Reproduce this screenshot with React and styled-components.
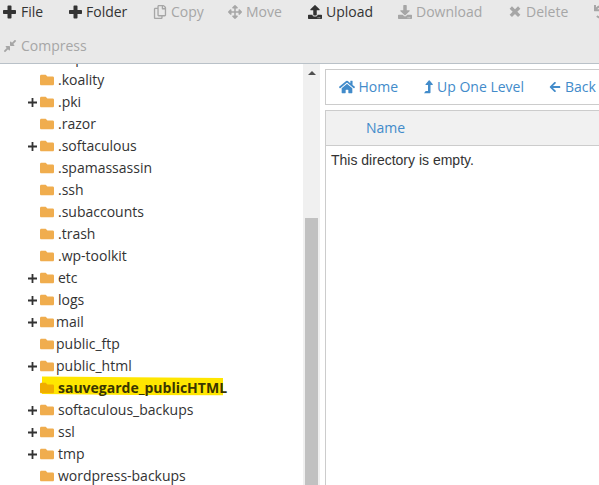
import React from "react";
import styled, { createGlobalStyle } from "styled-components";
import {
  FaRegCopy, FaArrowsAlt, FaUpload, FaDownload, FaUndo,
  FaCompressAlt, FaHome, FaArrowLeft, FaFolder,
} from "react-icons/fa";

const GlobalStyle = createGlobalStyle`
  * { box-sizing: border-box; }
  body { margin: 0; background: #fff; overflow: hidden; }
`;

const Page = styled.div`
  width: 599px;
  height: 485px;
  display: flex;
  flex-direction: column;
  overflow: hidden;
  color: #333;
  font: 14px/22px "Open Sans", "Noto Sans", sans-serif;
`;

const Toolbar = styled.header`
  height: 64px;
  flex: none;
  background: #e9e9e9;
  border-bottom: 1px solid #b9c1c8;
  overflow: hidden;
`;

const ToolRow = styled.div`
  display: flex;
  height: 34px;
  padding: 1px 0 0 3px;
`;

const Tool = styled.button`
  flex: 0 0 ${(p) => p.$width}px;
  display: flex;
  align-items: center;
  height: 22px;
  padding: 0;
  border: 0;
  background: none;
  font: inherit;
  white-space: nowrap;
  color: ${(p) => (p.$disabled ? "#a6a6a6" : "#333")};
  svg { flex: none; margin-right: ${(p) => p.$gap ?? 4}px; }
`;

const Body = styled.main`
  display: flex;
  flex: 1;
  min-height: 0;
`;

const Tree = styled.nav`
  width: 303px;
  overflow: hidden;
`;

const TreeList = styled.ul`
  list-style: none;
  margin: -17px 0 0;
  padding: 0 0 0 27px;
`;

const TreeItem = styled.li`
  display: flex;
  align-items: center;
  height: 22px;
  white-space: nowrap;
  font-weight: ${(p) => (p.$selected ? 700 : 400)};
  color: ${(p) => (p.$selected ? "#3a3500" : "#333")};
`;

const Toggle = styled.span`
  width: 13px;
  height: 11px;
  display: flex;
  svg { margin: 1px 0 0 1px; }
`;

const Entry = styled.span`
  position: relative;
  display: flex;
  align-items: center;
  svg.folder {
    position: relative;
    margin-right: ${(p) => (p.$tight ? 2 : 4)}px;
    color: ${(p) => (p.$selected ? "#f0ad00" : "#f0ad4e")};
  }
`;

const Label = styled.span`
  position: relative;
`;

const Marker = styled.svg`
  position: absolute;
  left: 2px;
  top: 0;
  overflow: visible;
`;

const Scrollbar = styled.div`
  width: 17px;
  background: #f0f0f0;
  display: flex;
  flex-direction: column;
  align-items: center;
`;

const ScrollUp = styled.svg`
  margin-top: 7px;
  flex: none;
`;

const Thumb = styled.div`
  width: 13px;
  flex: 1;
  margin-top: 143px;
  background: #c1c1c1;
`;

const Content = styled.section`
  flex: 1;
  min-width: 0;
  display: flex;
  flex-direction: column;
  padding: 5px 0 0 5px;
`;

const Actions = styled.div`
  height: 36px;
  flex: none;
  display: flex;
  align-items: center;
  padding-left: 13px;
  border: 1px solid #ccc;
  border-right: 0;
`;

const Action = styled(Tool)`
  color: #428bca;
`;

const Listing = styled.div`
  flex: 1;
  margin-top: 5px;
  border: 1px solid #ccc;
  border-width: 1px 0 0 1px;
`;

const ListHead = styled.div`
  height: 35px;
  padding: 6px 0 0 40px;
  background: #f1f1f1;
  border-bottom: 1px solid #ccc;
  color: #428bca;
`;

const Empty = styled.p`
  margin: 3px 0 0 5px;
  font: 14px/22px "Liberation Sans", Arial, sans-serif;
`;

const BoldPlus = () => (
  <svg width="14" height="14" viewBox="0 0 14 14" fill="currentColor">
    <path d="M5.3.5h2.4q.8 0 .8.8V5h3.7q.8 0 .8.8v2.4q0 .8-.8.8H8.5v3.7q0 .8-.8.8H5.3q-.8 0-.8-.8V9H.8Q0 9 0 8.200V5.800Q0 5 .8 5h3.700V1.300q0-.8.8-.8Z" />
  </svg>
);

const BoldTimes = () => (
  <svg width="14" height="14" viewBox="0 0 14 14" fill="none" stroke="currentColor">
    <path d="M2.800 2.500L11.200 10.900M11.200 2.500L2.800 10.900" strokeWidth="3.300" />
  </svg>
);

const LevelUp = () => (
  <svg width="9" height="14" viewBox="0 0 9 14" fill="currentColor">
    <path d="M0 13.200L1.700 11H4V5H2Q1.200 5 1.600 4.200L4.700.4Q5.200 0 5.700.4L8.800 4.200Q9.100 5 8.400 5H6.500V12.600Q6.500 13.300 5.800 13.300H.2Z" />
  </svg>
);

const tools = [
  { label: "File", Icon: BoldPlus, width: 66 },
  { label: "Folder", Icon: BoldPlus, width: 84, gap: 3 },
  { label: "Copy", Icon: FaRegCopy, width: 75, disabled: true },
  { label: "Move", Icon: FaArrowsAlt, width: 80, disabled: true },
  { label: "Upload", Icon: FaUpload, width: 90 },
  { label: "Download", Icon: FaDownload, width: 110, disabled: true },
  { label: "Delete", Icon: BoldTimes, width: 86, disabled: true },
  { label: "", Icon: FaUndo, width: 14, disabled: true },
];

const folders = [
  { name: ".htpasswds" },
  { name: ".koality" },
  { name: ".pki", open: true },
  { name: ".razor" },
  { name: ".softaculous", open: true },
  { name: ".spamassassin" },
  { name: ".ssh" },
  { name: ".subaccounts" },
  { name: ".trash" },
  { name: ".wp-toolkit" },
  { name: "etc", open: true },
  { name: "logs", open: true },
  { name: "mail", open: true, tight: true },
  { name: "public_ftp", tight: true },
  { name: "public_html", open: true, tight: true },
  { name: "sauvegarde_publicHTML", selected: true },
  { name: "softaculous_backups", open: true },
  { name: "ssl", open: true },
  { name: "tmp", open: true },
  { name: "wordpress-backups" },
];

export default function App() {
  return (
    <Page>
      <GlobalStyle />
      <Toolbar>
        <ToolRow>
          {tools.map(({ label, Icon, width, disabled, gap }) => (
            <Tool key={label} $width={width} $disabled={disabled} $gap={gap}>
              <Icon size={14} />{label}
            </Tool>
          ))}
        </ToolRow>
        <ToolRow>
          <Tool $width={90} $disabled><FaCompressAlt size={14} />Compress</Tool>
        </ToolRow>
      </Toolbar>
      <Body>
        <Tree>
          <TreeList>
            {folders.map((f) => (
              <TreeItem key={f.name} $selected={f.selected}>
                <Toggle>
                  {f.open && (
                    <svg width="9" height="9" viewBox="0 0 9 9"><path d="M4.5 0v9M0 4.5h9" stroke="#333" strokeWidth="1.8" /></svg>
                  )}
                </Toggle>
                <Entry $selected={f.selected} $tight={f.tight}>
                  {f.selected && (
                    <Marker width="182" height="22" viewBox="0 0 182 22"><path d="M0-.5L181 1V18.300L90 18L0 17Z" fill="#ffe600" /></Marker>
                  )}
                  <FaFolder className="folder" size={14} />
                  <Label>{f.name}</Label>
                </Entry>
              </TreeItem>
            ))}
          </TreeList>
        </Tree>
        <Scrollbar>
          <ScrollUp width="8" height="4" viewBox="0 0 8 4"><path d="M4 0L8 4H0Z" fill="#505050" /></ScrollUp>
          <Thumb />
        </Scrollbar>
        <Content>
          <Actions>
            <Action $width={85} $gap={3.5}><FaHome size={16} />Home</Action>
            <Action $width={125}><LevelUp />Up One Level</Action>
            <Action $width={60}><FaArrowLeft size={12} />Back</Action>
          </Actions>
          <Listing>
            <ListHead>Name</ListHead>
            <Empty>This directory is empty.</Empty>
          </Listing>
        </Content>
      </Body>
    </Page>
  );
}
